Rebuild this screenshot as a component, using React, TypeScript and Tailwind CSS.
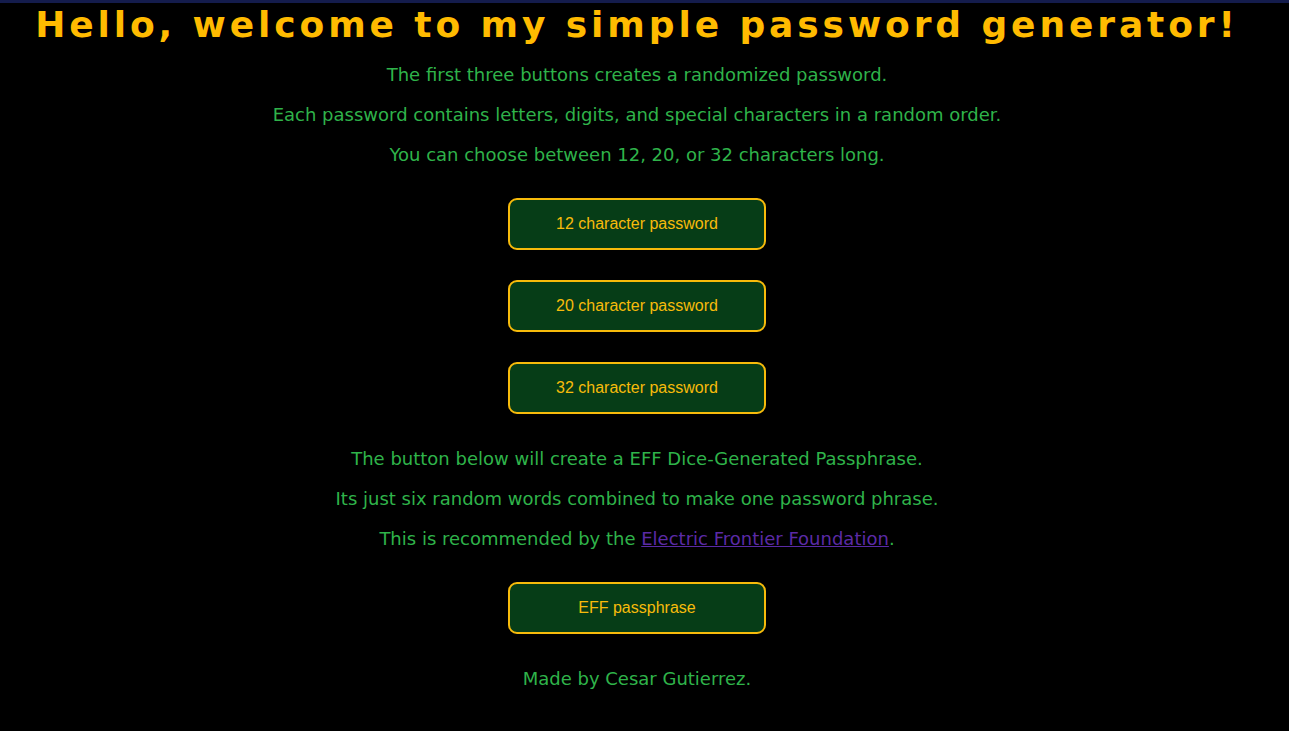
export default function App() {
  const body = "font-['DejaVu_Sans',Verdana,sans-serif] text-[18px] text-[#2fb34a] h-[40px] leading-[40px] text-center whitespace-nowrap";
  const btn =
    "w-[258px] h-[52px] rounded-[9px] border-2 border-[#f7bb0b] bg-[#063d17] text-[#f7bb0b] font-['Liberation_Sans',Arial,sans-serif] text-[16px] flex items-center justify-center";
  return (
    <div className="min-h-[731px] bg-black border-t-[3px] border-[#141c4c] pr-[15px] flex flex-col items-center">
      <h1 className="font-['DejaVu_Sans',Verdana,sans-serif] font-bold text-[36px] tracking-[3.9px] leading-[44px] text-[#ffbb00] text-center whitespace-nowrap">
        Hello, welcome to my simple password generator!
      </h1>
      <p className={body + " mt-[8px]"}>The first three buttons creates a randomized password.</p>
      <p className={body}>Each password contains letters, digits, and special characters in a random order.</p>
      <p className={body}>You can choose between 12, 20, or 32 characters long.</p>
      <button className={btn + " mt-[23px]"}>12 character password</button>
      <button className={btn + " mt-[30px]"}>20 character password</button>
      <button className={btn + " mt-[30px]"}>32 character password</button>
      <p className={body + " mt-[25px]"}>The button below will create a EFF Dice-Generated Passphrase.</p>
      <p className={body}>Its just six random words combined to make one password phrase.</p>
      <p className={body}>
        This is recommended by the{" "}
        <a href="#" className="text-[#5b2aa6] underline">Electric Frontier Foundation</a>.
      </p>
      <button className={btn + " mt-[23px]"}>EFF passphrase</button>
      <p className={body + " mt-[25px]"}>Made by Cesar Gutierrez.</p>
    </div>
  );
}
